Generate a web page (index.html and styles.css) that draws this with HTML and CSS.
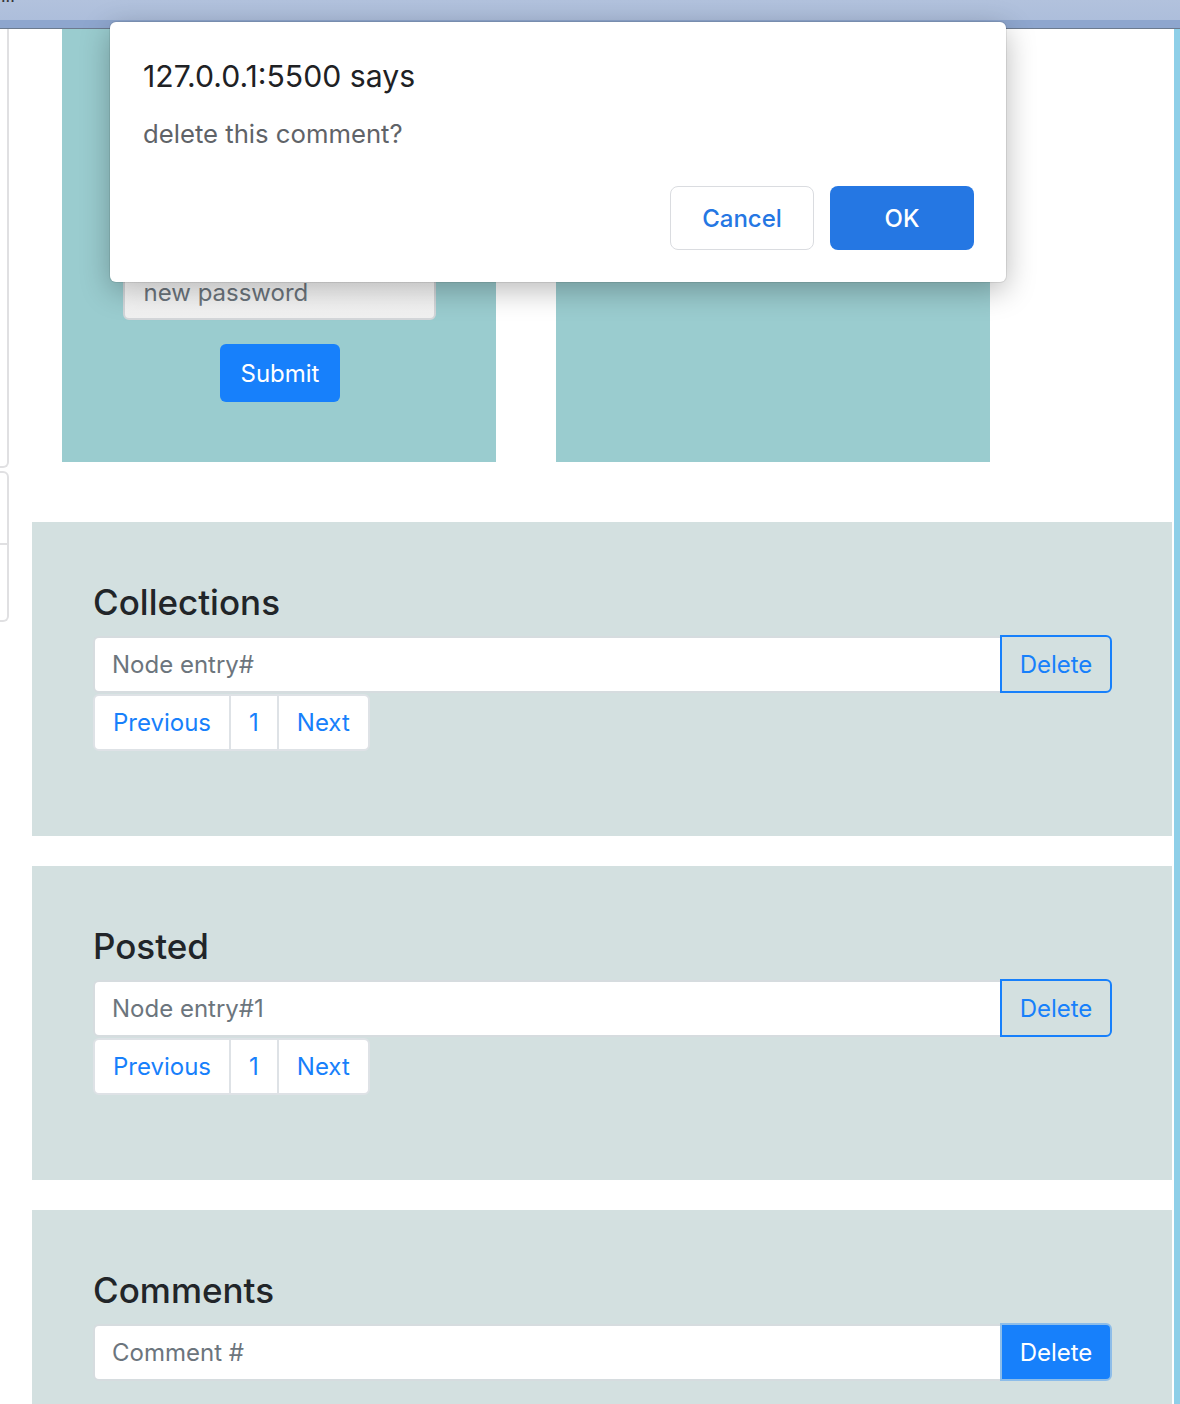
FILE: index.html
```html
<!DOCTYPE html>
<html lang="en">
<head>
<meta charset="utf-8">
<title>Profile</title>
<link rel="stylesheet" href="styles.css">
</head>
<body>
<div class="chrome">
  <div class="chrome-top"><span class="chrome-dots">...</span></div>
  <div class="chrome-band"></div>
</div>
<div class="page">
  <div class="sidebar">
    <div class="side-item side-first"></div>
    <div class="side-group">
      <div class="side-item side-mid"></div>
      <div class="side-item side-last"></div>
    </div>
  </div>
  <main class="content">
    <div class="profile-row">
      <div class="card">
        <input class="field" type="text" placeholder="new password">
        <button class="btn-submit">Submit</button>
      </div>
      <div class="card"></div>
    </div>

    <section class="panel">
      <h3 class="panel-title">Collections</h3>
      <div class="input-group">
        <input class="group-input" type="text" placeholder="Node entry#">
        <button class="btn-delete">Delete</button>
      </div>
      <nav class="pager">
        <a class="page-link page-first">Previous</a>
        <a class="page-link">1</a>
        <a class="page-link page-last">Next</a>
      </nav>
    </section>

    <section class="panel">
      <h3 class="panel-title">Posted</h3>
      <div class="input-group">
        <input class="group-input" type="text" placeholder="Node entry#1">
        <button class="btn-delete">Delete</button>
      </div>
      <nav class="pager">
        <a class="page-link page-first">Previous</a>
        <a class="page-link">1</a>
        <a class="page-link page-last">Next</a>
      </nav>
    </section>

    <section class="panel">
      <h3 class="panel-title">Comments</h3>
      <div class="input-group">
        <input class="group-input" type="text" placeholder="Comment #">
        <button class="btn-delete btn-delete-solid">Delete</button>
      </div>
    </section>
  </main>
  <div class="rightbar"></div>
</div>

<div class="dialog">
  <div class="dialog-title">127.0.0.1:5500 says</div>
  <div class="dialog-msg">delete this comment?</div>
  <div class="dialog-actions">
    <button class="dlg-btn dlg-cancel">Cancel</button>
    <button class="dlg-btn dlg-ok">OK</button>
  </div>
</div>
</body>
</html>
```
FILE: styles.css
```css
* { box-sizing: border-box; }
html, body { margin: 0; padding: 0; }
body {
  width: 1180px;
  height: 1404px;
  overflow: hidden;
  background: #ffffff;
  font-family: Inter, "Helvetica Neue", Arial, sans-serif;
  color: #212529;
  position: relative;
}

/* browser chrome */
.chrome-top {
  height: 20px;
  background: linear-gradient(#b2c2dd, #adbedb);
  overflow: hidden;
}
.chrome-dots {
  display: block;
  margin-top: -14px;
  margin-left: 1px;
  font-size: 16px;
  color: #333;
}
.chrome-band {
  height: 9px;
  background: #8ea6ce;
  border-bottom: 1px solid #6c7a8e;
}

.page {
  display: flex;
  align-items: flex-start;
}

/* left sidebar remnants */
.sidebar {
  width: 9px;
  overflow: hidden;
  flex: none;
}
.side-item {
  width: 40px;
  margin-left: -31px;
  border: 2px solid #e0e0e2;
}
.side-first {
  height: 439px;
  border-top: none;
  border-radius: 0 0 6px 0;
}
.side-group { margin-top: 3px; }
.side-mid {
  height: 74px;
  border-radius: 0 6px 0 0;
}
.side-last {
  height: 77px;
  border-top: none;
  border-radius: 0 0 6px 0;
}

.content {
  width: 1140px;
  margin-left: 23px;
  margin-right: 2px;
  flex: none;
}
.rightbar {
  width: 6px;
  height: 1380px;
  background: #8ecfe8;
  flex: none;
}

/* teal cards */
.profile-row {
  display: flex;
  gap: 60px;
  padding-left: 30px;
}
.card {
  width: 434px;
  height: 433px;
  background: #9acccf;
  display: flex;
  flex-direction: column;
  align-items: center;
  padding-top: 235px;
}
.field {
  width: 313px;
  height: 56px;
  border: 2px solid #d3d6d9;
  border-radius: 6px;
  background: linear-gradient(#ffffff, #f0f0f0);
  font-family: inherit;
  font-size: 24px;
  padding: 0 19px;
  margin-bottom: 24px;
  color: #495057;
}
.field::placeholder { color: #6c757d; }
.btn-submit {
  width: 120px;
  height: 58px;
  border: none;
  border-radius: 6px;
  background: #1780fb;
  color: #fff;
  font-family: inherit;
  font-size: 24px;
  margin-left: 2px;
}

/* panels */
.panel {
  background: #d3e0e0;
  height: 314px;
  margin-top: 60px;
  padding: 56px 60px 0 61px;
}
.panel + .panel { margin-top: 30px; }
.panel-title {
  margin: 0 0 10px;
  font-size: 35px;
  font-weight: 500;
  line-height: 48px;
  color: #212529;
}
.input-group {
  display: flex;
  height: 57px;
}
.group-input {
  flex: 1;
  min-width: 0;
  height: 57px;
  border: 2px solid #d6dcdf;
  border-right: none;
  border-radius: 6px 0 0 6px;
  background: #fff;
  font-family: inherit;
  font-size: 24px;
  padding: 0 17px;
  color: #495057;
}
.group-input::placeholder { color: #6c757d; }
.btn-delete {
  width: 112px;
  height: 58px;
  margin-top: -1px;
  border: 2px solid #1780fb;
  border-radius: 0 6px 6px 0;
  background: transparent;
  color: #1780fb;
  font-family: inherit;
  font-size: 24px;
  padding: 0;
}
.btn-delete-solid {
  background: #1780fb;
  color: #fff;
  border-color: #8dbde9;
}

.pager {
  display: flex;
  margin-top: 1px;
}
.page-link {
  height: 57px;
  display: flex;
  align-items: center;
  padding: 0 18px;
  background: #fff;
  border: 2px solid #dee2e6;
  margin-left: -2px;
  color: #1780fb;
  font-size: 24px;
}
.page-first { margin-left: 0; border-radius: 6px 0 0 6px; }
.page-last { border-radius: 0 6px 6px 0; }

/* dialog overlay */
.dialog {
  position: absolute;
  left: 110px;
  top: 22px;
  width: 896px;
  height: 260px;
  background: #fff;
  border-radius: 6px;
  box-shadow: 0 8px 30px rgba(0, 0, 0, 0.28), 0 0 0 1px rgba(0, 0, 0, 0.08);
  padding: 34px 32px 0 33px;
}
.dialog-title {
  font-size: 30.2px;
  line-height: 40px;
  color: #202124;
}
.dialog-msg {
  margin-top: 22px;
  font-size: 25.7px;
  line-height: 32px;
  color: #5f6368;
}
.dialog-actions {
  display: flex;
  justify-content: flex-end;
  gap: 16px;
  margin-top: 36px;
}
.dlg-btn {
  width: 144px;
  height: 64px;
  border-radius: 8px;
  font-family: inherit;
  font-size: 24px;
  font-weight: 500;
}
.dlg-cancel {
  background: #fff;
  border: 1px solid #dadce0;
  color: #2577e3;
}
.dlg-ok {
  background: #2577e3;
  border: none;
  color: #fff;
}
```
